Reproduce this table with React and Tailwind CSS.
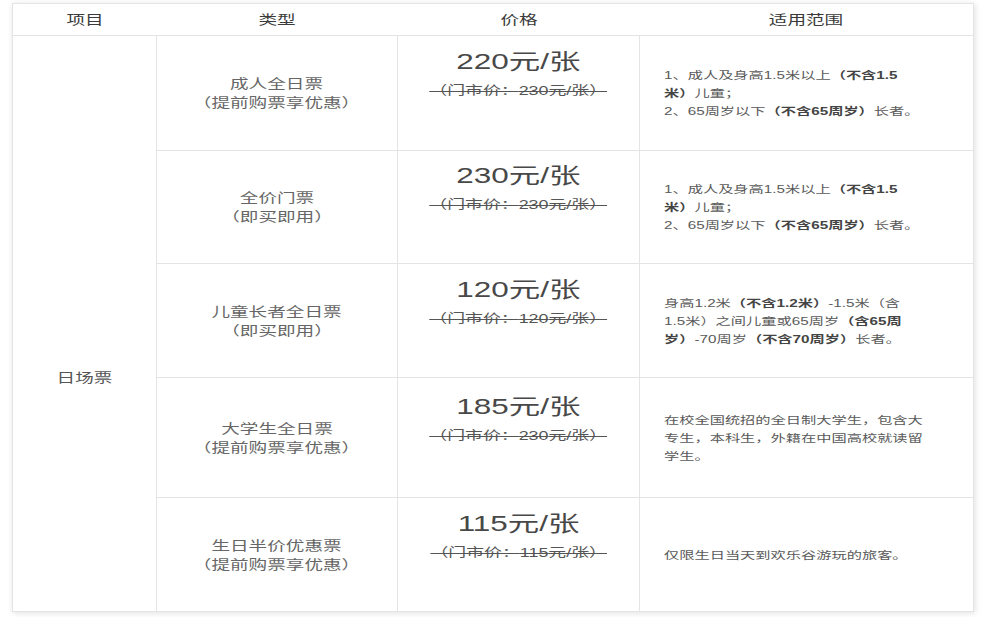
import React from "react";

function W({ children, className = "" }) {
  return (
    <span className={"inline-block scale-x-[1.43] whitespace-nowrap " + className}>
      {children}
    </span>
  );
}

const rows = [
  {
    type: ["成人全日票", "（提前购票享优惠）"],
    price: "220",
    orig: "230",
    scope: [
      [["1、成人及身高1.5米以上", 0], ["（不含1.5", 1]],
      [["米）", 1], ["儿童；", 0]],
      [["2、65周岁以下", 0], ["（不含65周岁）", 1], ["长者。", 0]],
    ],
  },
  {
    type: ["全价门票", "（即买即用）"],
    price: "230",
    orig: "230",
    scope: [
      [["1、成人及身高1.5米以上", 0], ["（不含1.5", 1]],
      [["米）", 1], ["儿童；", 0]],
      [["2、65周岁以下", 0], ["（不含65周岁）", 1], ["长者。", 0]],
    ],
  },
  {
    type: ["儿童长者全日票", "（即买即用）"],
    price: "120",
    orig: "120",
    scope: [
      [["身高1.2米", 0], ["（不含1.2米）", 1], ["-1.5米（含", 0]],
      [["1.5米）之间儿童或65周岁", 0], ["（含65周", 1]],
      [["岁）", 1], ["-70周岁", 0], ["（不含70周岁）", 1], ["长者。", 0]],
    ],
  },
  {
    type: ["大学生全日票", "（提前购票享优惠）"],
    price: "185",
    orig: "230",
    scope: [
      [["在校全国统招的全日制大学生，包含大", 0]],
      [["专生，本科生，外籍在中国高校就读留", 0]],
      [["学生。", 0]],
    ],
  },
  {
    type: ["生日半价优惠票", "（提前购票享优惠）"],
    price: "115",
    orig: "115",
    scope: [[["仅限生日当天到欢乐谷游玩的旅客。", 0]]],
  },
];

export default function App() {
  return (
    <div className="min-h-[617px] w-[985px] overflow-hidden bg-white font-['Liberation_Sans','Noto_Sans_CJK_SC',sans-serif] pt-[3px] pl-[12px]">
      <div className="grid w-[962px] grid-cols-[144px_241px_242px_333px] grid-rows-[32px_115px_113px_114px_120px_113px] border border-[#e4e4e4] bg-white shadow-[1px_1px_6px_rgba(0,0,0,0.13)]">
        {["项目", "类型", "价格", "适用范围"].map((h) => (
          <div
            key={h}
            className="flex items-center justify-center border-b border-[#e4e4e4] text-[13px] text-[#3a3a3a]"
          >
            <W>{h}</W>
          </div>
        ))}

        <div className="row-span-5 flex items-center justify-center border-r border-[#e4e4e4] pt-[108px] text-[13px] text-[#555]">
          <W>日场票</W>
        </div>

        {rows.map((r, i) => {
          const last = i === rows.length - 1;
          const bb = last ? "" : "border-b";
          return (
            <React.Fragment key={i}>
              <div
                className={
                  "flex flex-col items-center justify-center border-r border-[#e4e4e4] text-[13px] leading-[19px] text-[#666] " +
                  bb
                }
              >
                <W>{r.type[0]}</W>
                <W>{r.type[1]}</W>
              </div>
              <div
                className={
                  "flex flex-col items-center justify-center border-r border-[#e4e4e4] pb-[37px] " +
                  bb
                }
              >
                <W className="text-[22px] leading-[28px] text-[#484848]">{r.price}元/张</W>
                <W className="mt-[5px] text-[12.5px] leading-[20px] text-[#555] line-through">
                  （门市价：{r.orig}元/张）
                </W>
              </div>
              <div
                className={
                  "flex flex-col items-start justify-center border-[#e4e4e4] pl-[24px] text-[10.5px] leading-[18px] text-[#5a5a5a] " +
                  bb
                }
              >
                <div className="w-fit origin-left scale-x-[1.45] whitespace-nowrap">
                  {r.scope.map((line, j) => (
                    <div key={j}>
                      {line.map(([t, b], k) => (
                        <span key={k} className={b ? "font-semibold text-[#444]" : ""}>
                          {t}
                        </span>
                      ))}
                    </div>
                  ))}
                </div>
              </div>
            </React.Fragment>
          );
        })}
      </div>
    </div>
  );
}
